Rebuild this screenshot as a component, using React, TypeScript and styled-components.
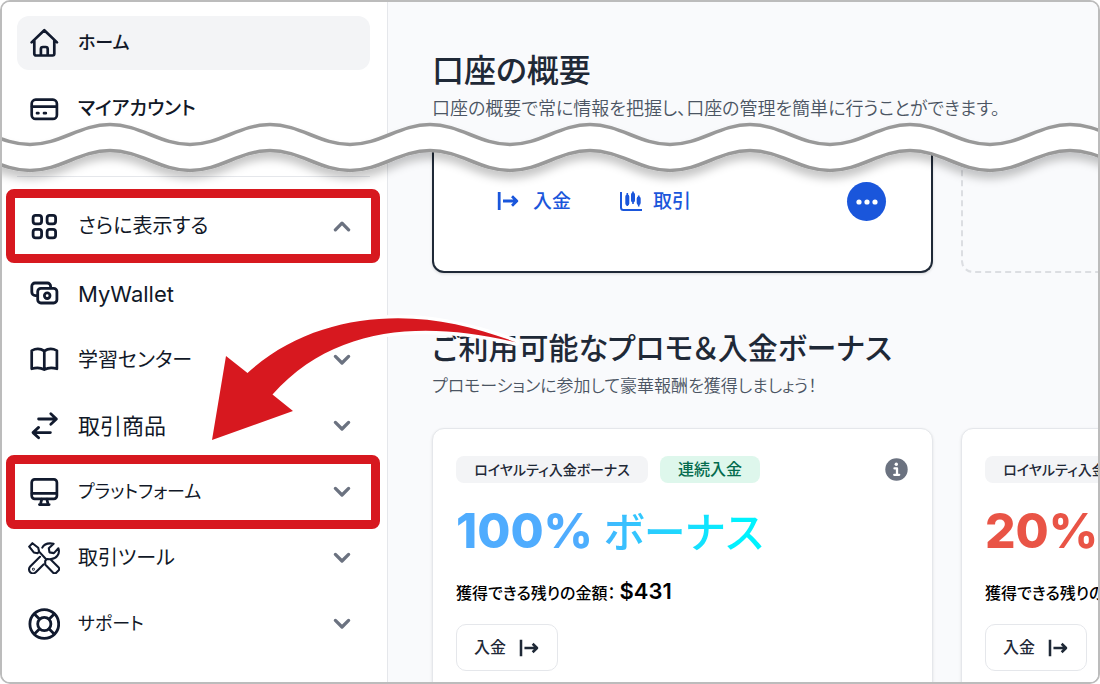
import React from "react";
import styled, { createGlobalStyle, css } from "styled-components";

const GlobalStyle = createGlobalStyle`
  *, *::before, *::after { box-sizing: border-box; }
  body {
    margin: 0;
    background: #ffffff;
    color: #111827;
    font-family: Inter, "Noto Sans CJK JP", sans-serif;
    font-feature-settings: "palt";
  }
  h1, h2, p, ul { margin: 0; padding: 0; }
  ul { list-style: none; }
  button { font: inherit; font-feature-settings: inherit; color: inherit; cursor: pointer; }
  a { color: inherit; text-decoration: none; }
`;

const Frame = styled.div`
  position: relative;
  display: flex;
  height: 100vh;
  overflow: hidden;
  border: 2px solid #bcbcbc;
  border-radius: 10px;
`;

/* ---------- sidebar ---------- */

const Sidebar = styled.nav`
  flex: 0 0 386px;
  padding: 14px 17px 0 15px;
  background: #ffffff;
  border-right: 1px solid #e5e7eb;
`;

const NavList = styled.ul`
  display: flex;
  flex-direction: column;
  gap: 12px;
`;

const MoreGroup = styled.div`
  margin-top: 40px;
  padding-top: 22px;
  border-top: 1px solid #e5e7eb;
`;

const SubList = styled(NavList)`
  margin-top: 14px;
`;

const NavItem = styled.li`
  position: relative;
`;

const GroupHeader = styled.div`
  position: relative;
`;

const rowStyle = css<{ $active?: boolean; $strong?: boolean }>`
  display: flex;
  align-items: center;
  gap: 18px;
  width: 100%;
  height: 54px;
  padding: 0 19px 0 11px;
  border: 0;
  border-radius: 12px;
  background: ${(p) => (p.$active ? "#f3f4f6" : "transparent")};
  line-height: 32px;
  font-weight: ${(p) => (p.$strong ? 500 : 380)};
  text-align: left;
`;

const RowLink = styled.a`
  ${rowStyle}
`;

const RowButton = styled.button`
  ${rowStyle}
`;

const RowLabel = styled.span<{ $size: number }>`
  flex: 1;
  font-size: ${(p) => p.$size}px;
`;

const Highlight = styled.span`
  position: absolute;
  inset: -10px -10px -10px -11px;
  border: 9px solid #d7181f;
  border-radius: 8px;
  pointer-events: none;
`;

/* ---------- main column ---------- */

const Main = styled.main`
  flex: 1;
  min-width: 0;
  padding: 45px 0 0 44px;
  background: #f9fafc;
  overflow: hidden;
`;

const Section = styled.section`
  & + & { margin-top: 51px; }
`;

const SectionTitle = styled.h2<{ $size: number }>`
  font-size: ${(p) => p.$size}px;
  line-height: 48px;
  font-weight: 500;
  color: #1f2937;
`;

const SectionText = styled.p<{ $size: number }>`
  font-size: ${(p) => p.$size}px;
  line-height: 28px;
  font-weight: 350;
  color: #4b5563;
`;

const Track = styled.div<{ $top: number }>`
  display: flex;
  gap: 28px;
  margin-top: ${(p) => p.$top}px;
`;

const AccountCard = styled.article`
  flex: 0 0 501px;
  display: flex;
  align-items: flex-start;
  justify-content: space-between;
  height: 127px;
  padding: 36px 45px 0 63px;
  background: #ffffff;
  border: 2px solid #1f2937;
  border-top: 0;
  border-radius: 0 0 12px 12px;
  box-shadow: 0 1px 3px rgba(0, 0, 0, 0.15);
`;

const EmptyCard = styled.div`
  flex: 0 0 501px;
  height: 127px;
  border: 2px dashed #dcdee2;
  border-top: 0;
  border-radius: 0 0 12px 12px;
`;

const Actions = styled.div`
  display: flex;
  gap: 48px;
`;

const ActionLink = styled.a<{ $gap: number }>`
  display: flex;
  align-items: center;
  gap: ${(p) => p.$gap}px;
  height: 38px;
  font-size: 19px;
  font-weight: 500;
  color: #1a56db;
`;

const Caption = styled.span`
  padding-bottom: 4px;
`;

const MoreButton = styled.button`
  display: flex;
  align-items: center;
  justify-content: center;
  width: 39px;
  height: 39px;
  padding: 0;
  border: 0;
  border-radius: 50%;
  background: #1a56db;
`;

const PromoCard = styled.article`
  flex: 0 0 501px;
  height: 300px;
  padding: 27px 24px 0 23px;
  background: #ffffff;
  border: 1px solid #e5e7eb;
  border-radius: 12px;
  box-shadow: 0 1px 3px rgba(0, 0, 0, 0.1);
`;

const BadgeRow = styled.div`
  display: flex;
  align-items: center;
  gap: 12px;
`;

const Badge = styled.span`
  min-width: 192px;
  padding: 0 16px;
  border-radius: 8px;
  font-size: 14px;
  line-height: 27px;
  font-weight: 500;
  text-align: center;
  white-space: nowrap;
  color: #1f2937;
  background: #f3f4f6;
`;

const GreenBadge = styled(Badge)`
  min-width: 100px;
  font-size: 16px;
  color: #046c4e;
  background: #def7ec;
`;

const InfoButton = styled.button`
  display: flex;
  margin-left: auto;
  padding: 0;
  border: 0;
  background: none;
`;

const Bonus = styled.p<{ $fill: string }>`
  width: max-content;
  height: 72px;
  margin-top: 12px;
  font-size: 48px;
  line-height: 72px;
  font-weight: 800;
  color: transparent;
  background: ${(p) => p.$fill};
  background-clip: text;
  -webkit-background-clip: text;
`;

const BonusWord = styled.span`
  font-size: 42px;
  line-height: 48px;
  font-weight: 500;
`;

const Remaining = styled.p`
  height: 32px;
  margin-top: 10px;
  font-size: 16px;
  line-height: 32px;
  font-weight: 500;
  color: #000000;
  white-space: nowrap;
`;

const Amount = styled.strong`
  margin-left: 4px;
  font-size: 22px;
  line-height: 24px;
  font-weight: 600;
`;

const DepositButton = styled.button`
  display: flex;
  align-items: center;
  gap: 13px;
  height: 47px;
  margin-top: 15px;
  padding: 0 18px 0 17px;
  border: 1px solid #e5e7eb;
  border-radius: 10px;
  background: #ffffff;
  font-size: 16px;
  font-weight: 500;
  color: #1f2937;
`;

/* ---------- overlays ---------- */

const WaveLayer = styled.svg`
  position: absolute;
  top: 0;
  left: 0;
  width: 100%;
  height: 200px;
  pointer-events: none;
`;

const ArrowLayer = styled.svg`
  position: absolute;
  top: 308px;
  left: 198px;
  pointer-events: none;
`;

/* ---------- icons ---------- */

const Icon = ({ children, width = 3 }: { children: React.ReactNode; width?: number }) => (
  <svg
    width="32"
    height="32"
    viewBox="0 0 32 32"
    fill="none"
    stroke="#111a2e"
    strokeWidth={width}
    strokeLinecap="round"
    strokeLinejoin="round"
    aria-hidden="true"
  >
    {children}
  </svg>
);

const HomeIcon = () => (
  <Icon width={2.7}>
    <path d="M3.6 15.4 16.3 3.2 29 15.4M6.3 13.5v13.3a1.7 1.7 0 0 0 1.7 1.7h16.6a1.7 1.7 0 0 0 1.7-1.7V13.5M12.9 28v-6a2 2 0 0 1 2-2h2.8a2 2 0 0 1 2 2v6" />
  </Icon>
);

const CardIcon = () => (
  <Icon width={2.7}>
    <rect x="3.7" y="6.7" width="25.2" height="19.2" rx="4" />
    <path d="M4 13.6h24.6M9 20.2h1.4M16 20.2h1.8" />
  </Icon>
);

const GridIcon = () => (
  <Icon width={2.8}>
    {[5.1, 19.1].map((x) =>
      [5.4, 19.4].map((y) => <rect key={`${x}-${y}`} x={x} y={y} width="8.5" height="8.5" rx="2.6" />)
    )}
  </Icon>
);

const WalletIcon = () => (
  <Icon width={2.8}>
    <path d="M8.6 17.6H7.4a3.6 3.6 0 0 1-3.6-3.6V8.2a3.2 3.2 0 0 1 3.2-3.2h12.4a3.2 3.2 0 0 1 3.2 3.2v1.6" />
    <rect x="9.7" y="10.400" width="19.2" height="14.600" rx="3.2" />
    <circle cx="19.2" cy="17.700" r="2.8" />
  </Icon>
);

const BookIcon = () => (
  <Icon width={2.7}>
    <path d="M16.3 7C12.6 4.6 7.6 4.6 3.7 6.600v18.200c3.900-1.300 8.900-1.300 12.600.800 3.700-2.100 8.700-2.100 12.600-.800V6.600C25 4.600 20 4.600 16.300 7v18.400" />
  </Icon>
);

const SwapIcon = () => (
  <Icon width={2.8}>
    <path d="M10.600 9h17.600M22.800 3.800 28.400 9l-5.600 5.200M22.400 22.600H5M10.600 17.400 5 22.600l5.600 5.200" />
  </Icon>
);

const MonitorIcon = () => (
  <Icon width={2.7}>
    <rect x="3.7" y="3.4" width="25.2" height="19.4" rx="3" />
    <path d="M4 17.400h24.600M13.800 23.200l-1.300 5M18.800 23.200l1.300 5M11.400 28.600h9.800" />
  </Icon>
);

const ToolsIcon = () => (
  <Icon width={2.1}>
    <path d="M1.200 4.600 4.400 1.200l5.800 4.600.9 3.800 6.800 7.400M11.100 9.600l-1.600 1.700-3.700-.9L1.200 4.600" />
    <path d="m17.200 18.900 1.800-1.900 3.400.2 8.300 8.400a2 2 0 0 1 0 2.600l-2.700 2.700a2 2 0 0 1-2.600 0l-8.200-8.300z" />
    <path d="M14.300 5.600C16.200 1.700 21 .9 25.600 1.700l-4.800 4.500.7 4.200 4.400.7 4.500-4.800c1.900 5.400-2 10.600-7.400 10.700M12 14.800 2.200 24.600a3.900 3.900 0 0 0 5.600 5.600l7.700-7.800" />
    <circle cx="5.400" cy="27.200" r=".4" />
  </Icon>
);

const SupportIcon = () => (
  <Icon width={2.8}>
    <circle cx="16.300" cy="16" r="14.400" />
    <circle cx="16.300" cy="16" r="6.600" />
    <path d="m6.400 6.100 5 5M26.200 6.100l-5 5M6.400 25.900l5-5M26.200 25.900l-5-5" />
  </Icon>
);

const Chevron = ({ up }: { up?: boolean }) => (
  <svg width="18" height="12" viewBox="0 0 18 12" fill="none" stroke="#6b7280" strokeWidth="3.300" strokeLinecap="round" strokeLinejoin="round" aria-hidden="true">
    <path d={up ? "M2.400 9.800 9 3.200l6.600 6.600" : "M2.400 2.400 9 9l6.600-6.600"} />
  </svg>
);

const DepositIcon = ({ size = 22 }: { size?: number }) => (
  <svg width={size} height={size} viewBox="0 0 22 22" fill="none" stroke="currentColor" strokeWidth="2.800" strokeLinejoin="round" aria-hidden="true">
    <path d="M2.200 2v18M6 11h14M15 6.300 19.800 11l-4.800 4.700" />
  </svg>
);

const TradeIcon = () => (
  <svg width="24" height="22" viewBox="0 0 24 22" fill="none" stroke="currentColor" strokeWidth="2" aria-hidden="true">
    <path d="M2 2v15.500a2.500 2.500 0 0 0 2.500 2.500H23" />
    <path d="M8.300 3v13M14 1.500v12.500M19.700 5.500v11" strokeWidth="1.600" />
    <path d="M8.300 6.500v7M14 4.500v6M19.700 8.500v4.500" strokeWidth="4" strokeLinecap="round" />
  </svg>
);

const InfoIcon = () => (
  <svg width="23" height="23" viewBox="0 0 23 23" aria-hidden="true">
    <circle cx="11.500" cy="11.500" r="11.200" fill="#6b7280" />
    <circle cx="11.300" cy="6.300" r="1.700" fill="#ffffff" />
    <path d="M9.500 10.400h2.500v6.200M9.200 16.800h5" stroke="#ffffff" strokeWidth="2.300" strokeLinecap="round" strokeLinejoin="round" fill="none" />
  </svg>
);

const Dots = () => (
  <svg width="24" height="6" viewBox="0 0 24 6" fill="#ffffff" aria-hidden="true">
    <circle cx="4" cy="3" r="2.600" />
    <circle cx="12" cy="3" r="2.600" />
    <circle cx="20" cy="3" r="2.600" />
  </svg>
);

/* Sine-like curve with a period of 160px, from left to right or back. */
const STEPS = 36;
const START = -132;

function waveForward(low: number, high: number) {
  let d = "";
  for (let i = 0; i < STEPS; i += 1) {
    const x = START + i * 80;
    const [from, to] = i % 2 === 0 ? [low, high] : [high, low];
    d += ` C${x + 30} ${from} ${x + 50} ${to} ${x + 80} ${to}`;
  }
  return d;
}

function waveBack(low: number, high: number) {
  let d = "";
  for (let i = STEPS; i > 0; i -= 1) {
    const x = START + i * 80;
    const [from, to] = i % 2 === 0 ? [low, high] : [high, low];
    d += ` C${x - 30} ${from} ${x - 50} ${to} ${x - 80} ${to}`;
  }
  return d;
}

const Wave = () => (
  <WaveLayer aria-hidden="true">
    <defs>
      <filter id="wave-shadow" x="-10%" y="-50%" width="120%" height="220%">
        <feDropShadow dx="0" dy="7" stdDeviation="4" floodColor="#000000" floodOpacity="0.22" />
      </filter>
    </defs>
    <path
      d={`M${START} 142.500${waveForward(142.5, 122.5)} L${START + STEPS * 80} 168.500${waveBack(168.5, 148.5)} Z`}
      fill="#ffffff"
      stroke="#999999"
      strokeWidth="3.600"
      filter="url(#wave-shadow)"
    />
  </WaveLayer>
);

const Arrow = () => (
  <ArrowLayer width="330" height="140" viewBox="200 310 330 140" aria-hidden="true">
    <path
      d="M212 440 226 356l21.500 17C290 334 345 318.300 398 318.300c42 0 80 10 118 24C430 322 337 322 272.500 394.500L293 411Z"
      fill="#d7181f"
      stroke="#ffffff"
      strokeWidth="7"
      strokeLinejoin="round"
      paintOrder="stroke"
    />
  </ArrowLayer>
);

/* ---------- page ---------- */

const moreItems = [
  { label: "MyWallet", icon: <WalletIcon />, size: 22 },
  { label: "学習センター", icon: <BookIcon />, size: 20, menu: true },
  { label: "取引商品", icon: <SwapIcon />, size: 22, menu: true },
  { label: "プラットフォーム", icon: <MonitorIcon />, size: 18, menu: true, marked: true },
  { label: "取引ツール", icon: <ToolsIcon />, size: 20, menu: true },
  { label: "サポート", icon: <SupportIcon />, size: 18, menu: true },
];

const promos = [
  { value: "100%", word: "ボーナス", extra: "連続入金", amount: "$431", fill: "linear-gradient(to right, #4facfe 40%, #00f2fe 92%)" },
  { value: "20%", fill: "#e95446" },
];

export default function App() {
  return (
    <>
      <GlobalStyle />
      <Frame lang="ja">
        <Sidebar>
          <NavList>
            <NavItem>
              <RowLink href="#home" $active $strong>
                <HomeIcon />
                <RowLabel $size={18}>ホーム</RowLabel>
              </RowLink>
            </NavItem>
            <NavItem>
              <RowLink href="#account" $strong>
                <CardIcon />
                <RowLabel $size={19}>マイアカウント</RowLabel>
              </RowLink>
            </NavItem>
          </NavList>
          <MoreGroup>
            <GroupHeader>
              <RowButton type="button" aria-expanded="true">
                <GridIcon />
                <RowLabel $size={20}>さらに表示する</RowLabel>
                <Chevron up />
              </RowButton>
              <Highlight />
            </GroupHeader>
            <SubList>
              {moreItems.map((item) => (
                <NavItem key={item.label}>
                  {item.menu ? (
                    <RowButton type="button" aria-expanded="false">
                      {item.icon}
                      <RowLabel $size={item.size}>{item.label}</RowLabel>
                      <Chevron />
                    </RowButton>
                  ) : (
                    <RowLink href="#wallet">
                      {item.icon}
                      <RowLabel $size={item.size}>{item.label}</RowLabel>
                    </RowLink>
                  )}
                  {item.marked && <Highlight />}
                </NavItem>
              ))}
            </SubList>
          </MoreGroup>
        </Sidebar>

        <Main>
          <Section>
            <SectionTitle $size={32}>口座の概要</SectionTitle>
            <SectionText $size={18}>口座の概要で常に情報を把握し、口座の管理を簡単に行うことができます。</SectionText>
            <Track $top={23}>
              <AccountCard>
                <Actions>
                  <ActionLink href="#deposit" $gap={14}>
                    <DepositIcon />
                    <Caption>入金</Caption>
                  </ActionLink>
                  <ActionLink href="#trade" $gap={10}>
                    <TradeIcon />
                    <Caption>取引</Caption>
                  </ActionLink>
                </Actions>
                <MoreButton type="button" aria-label="その他">
                  <Dots />
                </MoreButton>
              </AccountCard>
              <EmptyCard />
            </Track>
          </Section>

          <Section>
            <SectionTitle $size={30}>ご利用可能なプロモ＆入金ボーナス</SectionTitle>
            <SectionText $size={17}>プロモーションに参加して豪華報酬を獲得しましょう！</SectionText>
            <Track $top={28}>
              {promos.map((promo) => (
                <PromoCard key={promo.value}>
                  <BadgeRow>
                    <Badge>ロイヤルティ入金ボーナス</Badge>
                    {promo.extra && <GreenBadge>{promo.extra}</GreenBadge>}
                    {promo.extra && (
                      <InfoButton type="button" aria-label="詳細">
                        <InfoIcon />
                      </InfoButton>
                    )}
                  </BadgeRow>
                  <Bonus $fill={promo.fill}>
                    {promo.value} {promo.word && <BonusWord>{promo.word}</BonusWord>}
                  </Bonus>
                  <Remaining>
                    獲得できる残りの金額：<Amount>{promo.amount}</Amount>
                  </Remaining>
                  <DepositButton type="button">
                    <Caption>入金</Caption>
                    <DepositIcon size={20} />
                  </DepositButton>
                </PromoCard>
              ))}
            </Track>
          </Section>
        </Main>

        <Wave />
        <Arrow />
      </Frame>
    </>
  );
}
